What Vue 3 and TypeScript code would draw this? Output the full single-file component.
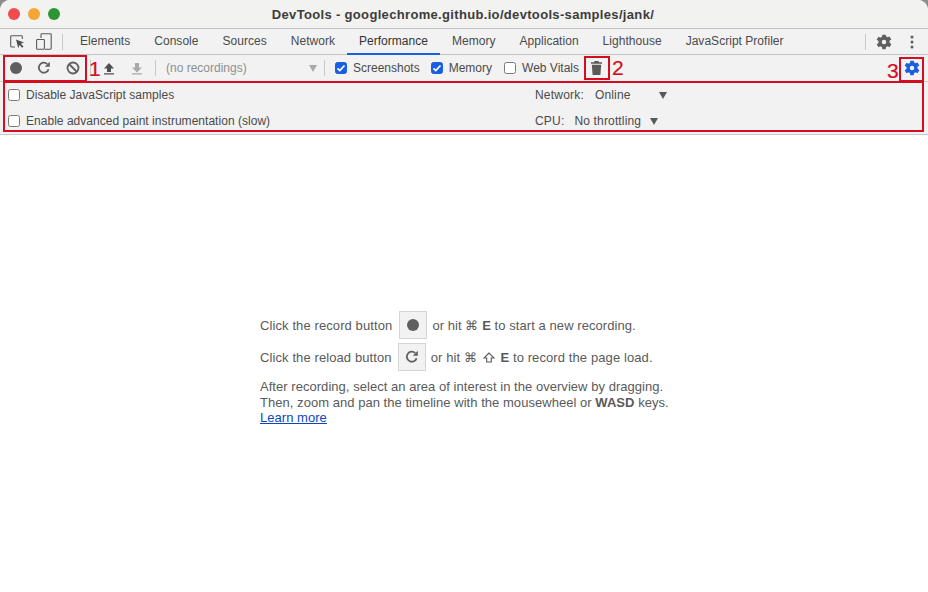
<script setup lang="ts">
const tabs: string[] = ['Elements', 'Console', 'Sources', 'Network', 'Performance', 'Memory', 'Application', 'Lighthouse', 'JavaScript Profiler']
const gearPath = 'M19.6 13.2a7.500 7.500 0 0 0 0-2.400l2.300-1.500-2.200-3.800-2.500 1.100a7.600 7.600 0 0 0-2-1.200L14.900 3.300h-4.300l-.3 2.600a7.600 7.600 0 0 0-2 1.200L5.800 6 3.600 9.800l2.300 1.500a7.500 7.500 0 0 0 0 2.400l-2.300 1.500 2.200 3.800 2.500-1.100a7.600 7.600 0 0 0 2 1.200l.3 2.600h4.300l.3-2.600a7.600 7.600 0 0 0 2-1.200l2.500 1.100 2.200-3.800zM12.750 15.200a2.800 2.800 0 1 1 0-5.600 2.800 2.800 0 0 1 0 5.600z'
</script>

<template>
  <div class="screen">
    <div class="window">
      <header class="titlebar">
        <div class="lights">
          <span class="light red"></span>
          <span class="light yellow"></span>
          <span class="light green"></span>
        </div>
        <div class="title">DevTools - googlechrome.github.io/devtools-samples/jank/</div>
      </header>

      <nav class="tabbar">
        <svg class="tool-icon inspect" width="16" height="16" viewBox="0 0 16 16">
          <path d="M5 13H1.500A.8.8 0 0 1 .7 12.200V2.500A.8.8 0 0 1 1.500 1.700h10a.8.8 0 0 1 .8.8V5" fill="none" stroke="#5a5a5a" stroke-width="1.100" />
          <path d="M6 5.500l8 3-3.200 1.300 2.700 2.700-1.300 1.300-2.700-2.700-1.200 3.200z" fill="#4f4f4f" />
        </svg>
        <svg class="tool-icon device" width="16" height="17" viewBox="0 0 16 17">
          <path d="M5 5V1.600A.8.8 0 0 1 5.800.8h8.600a.8.8 0 0 1 .8.8V15.400a.8.8 0 0 1-.8.8H9" fill="none" stroke="#5a5a5a" stroke-width="1.100" />
          <rect x=".6" y="6.500" width="7.800" height="9.700" rx=".8" fill="none" stroke="#5a5a5a" stroke-width="1.100" />
        </svg>
        <span class="vsep tab-sep"></span>
        <div class="tabs">
          <span v-for="t in tabs" :key="t" class="tab" :class="{ active: t === 'Performance' }">{{ t }}</span>
        </div>
        <span class="spacer"></span>
        <span class="vsep end-sep"></span>
        <svg class="gear-main" width="16" height="16" viewBox="2.750 2.500 20 20"><path :d="gearPath" fill="#5f5f5f" fill-rule="evenodd" /></svg>
        <svg class="kebab" width="4" height="14" viewBox="0 0 4 14">
          <circle cx="2" cy="2" r="1.500" fill="#5f5f5f" /><circle cx="2" cy="7" r="1.500" fill="#5f5f5f" /><circle cx="2" cy="12" r="1.500" fill="#5f5f5f" />
        </svg>
      </nav>

      <div class="toolbar">
        <span class="record-dot"></span>
        <svg class="reload-icon" width="14" height="14" viewBox="0 0 14 14">
          <path d="M11.600 8.200A5 5 0 1 1 10.200 3" fill="none" stroke="#5f5f5f" stroke-width="1.800" />
          <path d="M7.800 5.800h5V.8z" fill="#5f5f5f" />
        </svg>
        <svg class="clear-icon" width="14" height="14" viewBox="0 0 14 14">
          <circle cx="7" cy="7" r="5.500" fill="none" stroke="#5f5f5f" stroke-width="1.800" />
          <path d="M3 3l8 8" stroke="#5f5f5f" stroke-width="1.800" />
        </svg>
        <svg class="upload" width="12" height="13" viewBox="0 0 12 13"><path d="M6 1L1 6.500h3V10h4V6.500h3zM1 11.200h10v1.300H1z" fill="#4f4f4f" /></svg>
        <svg class="download" width="12" height="13" viewBox="0 0 12 13"><path d="M4 1h4v4.500h3L6 10.500 1 5.500h3zM1 11.200h10v1.300H1z" fill="#a9a9a9" /></svg>
        <span class="vsep rec-sep"></span>
        <div class="select-rec">
          <span>(no recordings)</span>
          <i class="caret light-caret"></i>
        </div>
        <span class="vsep sel-sep"></span>
        <label class="check first"><span class="box on"><svg width="10" height="10" viewBox="0 0 10 10"><path d="M1.500 5.300l2.300 2.300L8.500 2.500" fill="none" stroke="#fff" stroke-width="1.700" /></svg></span>Screenshots</label>
        <label class="check second"><span class="box on"><svg width="10" height="10" viewBox="0 0 10 10"><path d="M1.500 5.300l2.300 2.300L8.500 2.500" fill="none" stroke="#fff" stroke-width="1.700" /></svg></span>Memory</label>
        <label class="check third"><span class="box"></span>Web Vitals</label>
        <svg class="trash" width="11" height="14" viewBox="0 0 11 14"><path d="M3.600 0h3.800l.6 1.200h3V2.800H0V1.200h3zM.8 3.800h9.400L9.400 14H1.600z" fill="#5a5a5a" /></svg>
        <span class="spacer"></span>
        <svg class="gear-blue" width="16" height="16" viewBox="2.750 2.500 20 20"><path :d="gearPath" fill="#1a5fe0" fill-rule="evenodd" /></svg>
      </div>

      <section class="settings">
        <div class="row">
          <label class="check wide"><span class="box"></span>Disable JavaScript samples</label>
          <div class="opt net"><span class="opt-label">Network:</span><span class="opt-val">Online</span><i class="caret"></i></div>
        </div>
        <div class="row">
          <label class="check wide"><span class="box"></span>Enable advanced paint instrumentation (slow)</label>
          <div class="opt cpu"><span class="opt-label">CPU:</span><span class="opt-val">No throttling</span><i class="caret"></i></div>
        </div>
      </section>

      <main class="landing">
        <div class="instructions">
          <p class="line"><span>Click the record button</span><span class="kbd-btn first-btn"><span class="record-dot big"></span></span><span class="tail">or hit <span class="sym">⌘</span> <b>E</b> to start a new recording.</span></p>
          <p class="line second-line"><span>Click the reload button</span><span class="kbd-btn"><svg width="14" height="14" viewBox="0 0 14 14"><path d="M11.600 8.200A5 5 0 1 1 10.200 3" fill="none" stroke="#5f5f5f" stroke-width="1.800" /><path d="M7.800 5.800h5V.8z" fill="#5f5f5f" /></svg></span><span>or hit <span class="sym">⌘</span> <svg class="shift" width="12" height="11" viewBox="0 0 12 11"><path d="M6 1L1 6h2.700v4h4.600V6H11z" fill="none" stroke="#5a5a5a" stroke-width="1.100" /></svg> <b>E</b> to record the page load.</span></p>
          <p class="para">After recording, select an area of interest in the overview by dragging.<br />Then, zoom and pan the timeline with the mousewheel or <b>WASD</b> keys.<br /><a class="learn">Learn more</a></p>
        </div>
      </main>

      <div class="anno box1"></div>
      <div class="anno box2"></div>
      <div class="anno box3"></div>
      <div class="anno box4"></div>
      <span class="vsep after-one"></span>
      <span class="num n1">1</span>
      <span class="num n2">2</span>
      <span class="num n3">3</span>
    </div>
  </div>
</template>

<style scoped>
.screen {
  width: 928px;
  height: 592px;
  background: #8e8e8e;
  overflow: hidden;
  font-family: "Liberation Sans", Arial, sans-serif;
  font-size: 12px;
  color: #4a4a4a;
}
.window {
  position: relative;
  width: 928px;
  height: 592px;
  background: #fff;
  border-radius: 10px 10px 0 0;
  overflow: hidden;
  display: flex;
  flex-direction: column;
}
.titlebar {
  height: 28px;
  flex: none;
  background: #f2f2f0;
  border-bottom: 1px solid #c4c4c4;
  display: flex;
  align-items: center;
  position: relative;
}
.lights { display: flex; gap: 8px; padding-left: 8px; }
.light { width: 12px; height: 12px; border-radius: 50%; }
.red { background: #ee4c50; }
.yellow { background: #f3a536; }
.green { background: #2c9534; }
.title {
  position: absolute;
  left: 0;
  right: 2px;
  text-align: center;
  font-size: 13px;
  font-weight: 700;
  letter-spacing: 0.33px;
  color: #3c3c3c;
}
.tabbar {
  height: 25px;
  flex: none;
  background: #f2f2f2;
  border-bottom: 1px solid #c4c4c4;
  display: flex;
  align-items: center;
}
.inspect { margin-left: 10px; }
.device { margin-left: 10px; }
.vsep { width: 1px; height: 16px; background: #c8c8c8; flex: none; }
.tab-sep { margin-left: 10px; }
.tabs { display: flex; height: 100%; margin-left: 5px; }
.tab {
  display: flex;
  align-items: center;
  padding: 0 12px 1px;
  height: 100%;
  box-sizing: border-box;
  letter-spacing: 0.03px;
  color: #4a4a4a;
}
.tab.active {
  color: #333;
  border-bottom: 2px solid #1a5fe0;
  margin-bottom: -1px;
  height: 26px;
}
.spacer { flex: 1; }
.end-sep { margin-right: 10px; }
.gear-main { margin-right: 18px; }
.kebab { margin-right: 14px; }
.toolbar {
  height: 26px;
  flex: none;
  background: #f2f2f2;
  border-bottom: 1px solid #d0d0d0;
  display: flex;
  align-items: center;
  position: relative;
}
.record-dot { width: 12px; height: 12px; border-radius: 50%; background: #5f5f5f; flex: none; margin-left: 10px; }
.reload-icon { margin-left: 15px; }
.clear-icon { margin-left: 14.500px; }
.upload { margin-left: 23.500px; }
.download { margin-left: 16px; }
.rec-sep { margin-left: 12px; }
.select-rec {
  width: 151px;
  margin-left: 10px;
  color: #8f8f8f;
  display: flex;
  align-items: center;
  justify-content: space-between;
}
.sel-sep { margin-left: 7px; }
.check { display: inline-flex; align-items: center; color: #4a4a4a; white-space: nowrap; }
.wide { letter-spacing: 0.03px; }
.box {
  width: 10px;
  height: 10px;
  border: 1px solid #7a7a7a;
  border-radius: 2.500px;
  background: #fff;
  margin-right: 6px;
  display: inline-flex;
  align-items: center;
  justify-content: center;
  flex: none;
}
.box.on { background: #1a5fe0; border-color: #1a5fe0; }
.first { margin-left: 10px; }
.second { margin-left: 11px; }
.third { margin-left: 12px; }
.trash { margin-left: 12px; }
.gear-blue { margin-right: 8px; }
.caret {
  display: inline-block;
  width: 0;
  height: 0;
  border-left: 4px solid transparent;
  border-right: 4px solid transparent;
  border-top: 7px solid #5a5a5a;
}
.light-caret { border-top-color: #a9a9a9; }
.settings {
  height: 53px;
  flex: none;
  background: #f2f2f2;
  border-bottom: 1px solid #c8c8c8;
  display: flex;
  flex-direction: column;
  box-sizing: border-box;
}
.row { height: 26px; display: flex; align-items: center; padding-left: 8px; position: relative; }
.opt { position: absolute; left: 535px; display: flex; align-items: center; }
.opt-label { letter-spacing: 0.2px; }
.opt-val { margin-left: 11px; letter-spacing: 0.15px; }
.net .caret { margin-left: 28px; }
.cpu .opt-val { margin-left: 10px; }
.cpu .caret { margin-left: 9px; }
.landing {
  flex: 1;
  background: #fff;
  padding: 176px 0 0 260px;
  color: #5a5a5a;
}
.line {
  margin: 0;
  display: flex;
  align-items: center;
  height: 28px;
  font-size: 13px;
  letter-spacing: 0.1px;
  white-space: nowrap;
}
.second-line { margin-top: 4px; }
.kbd-btn {
  width: 26px;
  height: 26px;
  border: 1px solid #d4d4d4;
  background: #f2f2f2;
  display: inline-flex;
  align-items: center;
  justify-content: center;
  margin: 0 5px 0 6px;
}
.first-btn { margin-left: 7px; }
.tail { letter-spacing: 0.07px; }
.record-dot.big { margin-left: 0; }
.sym { font-size: 13px; }
.shift { vertical-align: -1px; margin: 0 2px; }
.para { margin: 8px 0 0; font-size: 13px; line-height: 15.500px; letter-spacing: 0.04px; white-space: nowrap; }
.learn { color: #0b46c0; text-decoration: underline; }
.anno { position: absolute; border: 2px solid #d40d20; box-sizing: border-box; }
.box1 { left: 3px; top: 55px; width: 84px; height: 27px; }
.box2 { left: 584px; top: 56px; width: 26px; height: 24px; }
.box3 { left: 899px; top: 57px; width: 25px; height: 25px; }
.box4 { left: 3px; top: 81px; width: 921px; height: 51px; }
.after-one { position: absolute; left: 90px; top: 60px; }
.num { position: absolute; color: #d40d20; font-size: 21px; line-height: 22px; -webkit-text-stroke: 0.2px #d40d20; }
.n1 { left: 89px; top: 58px; }
.n2 { left: 612px; top: 57px; }
.n3 { left: 887px; top: 60px; }
</style>
